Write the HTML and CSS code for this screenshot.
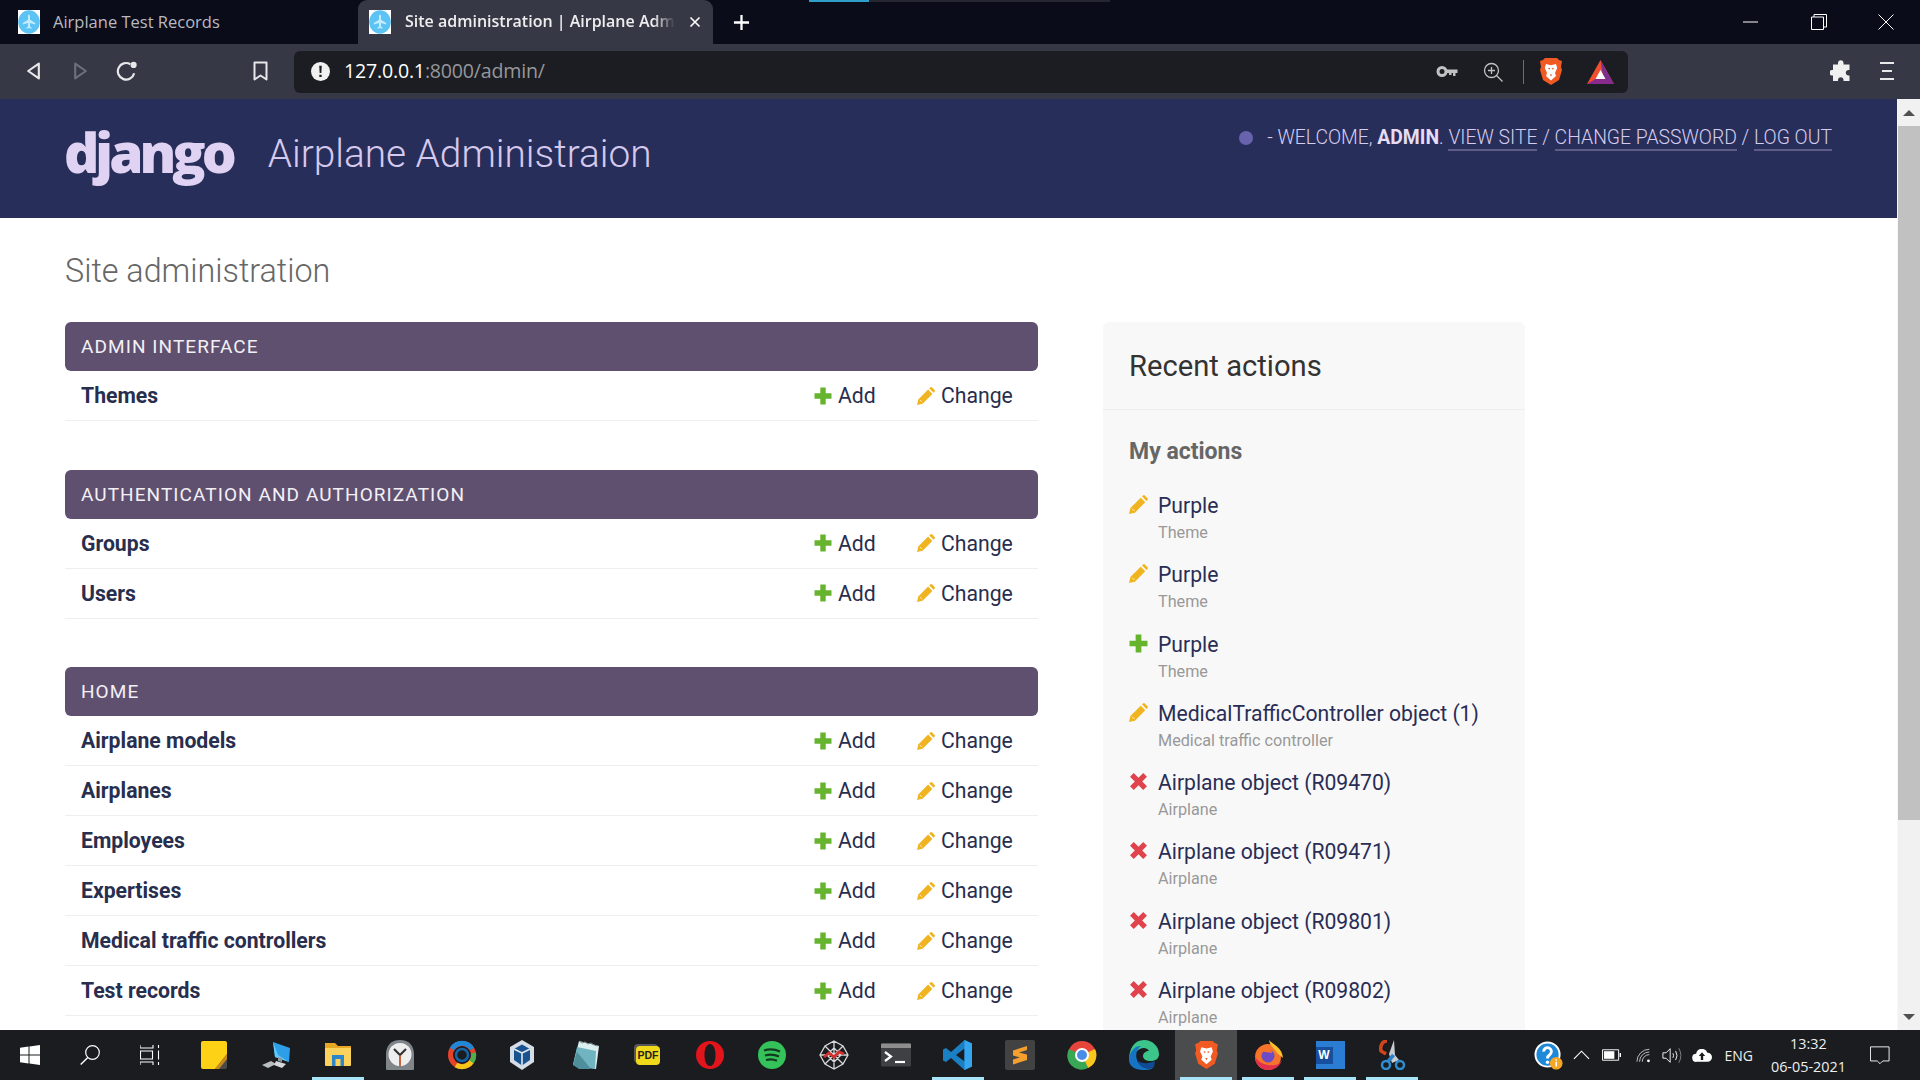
FILE: index.html
```html
<!DOCTYPE html>
<html lang="en">
<head>
<meta charset="utf-8">
<title>Site administration | Airplane Administraion</title>
<link rel="stylesheet" href="styles.css">
</head>
<body>
<svg class="defs" width="0" height="0" aria-hidden="true">
  <symbol id="fav" viewBox="0 0 22 24"><rect width="22" height="24" fill="#fff"/><ellipse cx="11" cy="12" rx="10.800" ry="11.800" fill="#5cc3f5"/><path d="M11 4.500c.7 0 1 .9 1 2v3.200l5.200 3.200v1.600L12 12.900v3.600l1.600 1.200v1L11 18l-2.600.7v-1L10 16.500v-3.600l-5.200 1.600v-1.600L10 9.700V6.500c0-1.100.3-2 1-2z" fill="#c4ecff"/></symbol>
  <symbol id="plus" viewBox="0 0 18 18"><path d="M6.300.5h5.400v5.800h5.800v5.400h-5.800v5.800H6.300v-5.800H.5V6.300h5.800z" fill="#66b32e"/></symbol>
  <symbol id="pencil" viewBox="0 0 18 18"><path d="M0 18l1.300-5.600L11.100 2.600l4.300 4.300-9.800 9.800z" fill="#efb41f"/><path d="M12.300 1.400l.8-.8a1.500 1.500 0 0 1 2.100 0l2.200 2.200a1.500 1.500 0 0 1 0 2.100l-.8.800z" fill="#efb41f"/><path d="M2.800 12.900l2.300 2.300" stroke="#fff" stroke-width=".7"/></symbol>
  <symbol id="cross" viewBox="0 0 18 18"><path d="M4.500 1L9 5.500 13.500 1 17 4.500 12.500 9l4.500 4.500-3.500 3.500L9 12.500 4.500 17 1 13.500 5.500 9 1 4.500z" fill="#e0434b"/></symbol>
  <symbol id="lion" viewBox="0 0 24 29"><path d="M6 1h12l2 2 3 1-1 6 1 3-3 10-8 5-8-5-3-10 1-3-1-6 3-1z" fill="#f15a22"/><path d="M7 7l5 1.200L17 7l1.200 4-2.200 5 1 3-5 4.500L7 19l1-3-2.200-5z" fill="#fff"/><path d="M8.800 11h2.400l-.7 1.700zM12.800 11h2.400l-1.700 1.700zM10.800 17.500h2.400L12 19.500z" fill="#f15a22"/></symbol>
</svg>

<header class="tabstrip">
  <div class="tab">
    <svg class="favicon"><use href="#fav"/></svg>
    <span class="tab-title">Airplane Test Records</span>
  </div>
  <div class="tab tab-active">
    <svg class="favicon"><use href="#fav"/></svg>
    <span class="tab-title tab-title-fade">Site administration | Airplane Administraion</span>
    <svg class="tab-close" viewBox="0 0 12 12"><path d="M1.500 1.500l9 9M10.500 1.500l-9 9" stroke="#fff" stroke-width="1.600"/></svg>
  </div>
  <svg class="newtab" viewBox="0 0 18 18"><path d="M9 1v16M1 9h16" stroke="#fff" stroke-width="2.400"/></svg>
  <div class="progress"><span class="progress-blue"></span></div>
  <div class="winctl">
    <span class="winbtn"><svg viewBox="0 0 16 16" width="16" height="16"><path d="M0 8h15" stroke="#fff"/></svg></span>
    <span class="winbtn"><svg viewBox="0 0 16 16" width="16" height="16"><path d="M.5 3h12v12.500H.5zM3 3V.5h12.500V13H12.500" fill="none" stroke="#fff"/></svg></span>
    <span class="winbtn"><svg viewBox="0 0 16 16" width="16" height="16"><path d="M.5.500l15 15M15.500.5l-15 15" stroke="#fff"/></svg></span>
  </div>
</header>

<nav class="toolbar">
  <svg class="tool tool-back" viewBox="0 0 16 18"><path d="M13 2L3 9l10 7z" fill="none" stroke="#e8e8ea" stroke-width="2" stroke-linejoin="round"/></svg>
  <svg class="tool tool-fwd" viewBox="0 0 16 18"><path d="M3 2l10 7-10 7z" fill="none" stroke="#6d6f79" stroke-width="2" stroke-linejoin="round"/></svg>
  <svg class="tool tool-reload" viewBox="0 0 20 20"><path d="M16.500 12a7.500 7.500 0 1 1-3.500-8.200" fill="none" stroke="#e8e8ea" stroke-width="2"/><circle cx="16" cy="4.500" r="2.800" fill="#e8e8ea"/></svg>
  <svg class="tool tool-mark" viewBox="0 0 16 20"><path d="M2 1.500h12v17l-6-4-6 4z" fill="none" stroke="#e8e8ea" stroke-width="2" stroke-linejoin="round"/></svg>
  <div class="omnibox">
    <svg class="warn" viewBox="0 0 18 18"><circle cx="9" cy="9" r="9" fill="#f1f1f1"/><path d="M7.800 3.500h2.400l-.4 7H8.200zM7.900 12h2.200v2.200H7.900z" fill="#1b1d22"/></svg>
    <span class="url"><span class="url-host">127.0.0.1</span>:8000/admin/</span>
    <svg class="omni-key" viewBox="0 0 22 13"><circle cx="6" cy="6.500" r="4" fill="none" stroke="#c2c2c4" stroke-width="3"/><path d="M9 4.500h12.500v3.500h-2v3h-2.500V8h-1.500v2H13V8H9z" fill="#c2c2c4"/></svg>
    <svg class="omni-zoom" viewBox="0 0 20 20"><circle cx="8.500" cy="8.500" r="7" fill="none" stroke="#c2c2c4" stroke-width="1.300"/><path d="M13.500 13.500l6 6M8.500 5v7M5 8.500h7" stroke="#c2c2c4" stroke-width="1.300"/></svg>
    <span class="omni-sep"></span>
    <svg class="omni-lion"><use href="#lion"/></svg>
    <svg class="omni-bat" viewBox="0 0 27 24"><path d="M13.500 0L27 24H0z" fill="#f1502f"/><path d="M13.500 0L27 24H17z" fill="#7c2f8d"/><path d="M13.500 10l5 9h-10z" fill="#fff"/><path d="M0 24l8.500-5h10L27 24z" fill="#8a2a8c"/></svg>
  </div>
  <svg class="tool tool-ext" viewBox="0 0 22 22"><path d="M8 2.500a2.800 2.800 0 0 1 5.500 0v2h6v5.500h-1.500a2.800 2.800 0 0 0 0 5.500h1.500V21h-6v-1.500a2.800 2.800 0 0 0-5.500 0V21H3v-5.500H1.800a2.800 2.800 0 0 1 0-5.500H3V4.500h5z" fill="#f0f0f0"/></svg>
  <svg class="tool tool-menu" viewBox="0 0 14 20"><path d="M0 2h14M2 10h10M0 18h14" stroke="#e8e8ea" stroke-width="2.200"/></svg>
</nav>

<div class="viewport">
  <div class="page">
    <div class="admin-header">
      <div class="branding">
        <span class="logo">django</span>
        <span class="site-name">Airplane Administraion</span>
      </div>
      <div class="user-tools">
        <span class="dot"></span>
        <span>- WELCOME, <strong>ADMIN</strong>. <a>VIEW SITE</a> / <a>CHANGE PASSWORD</a> / <a>LOG OUT</a></span>
      </div>
    </div>
    <main class="content">
      <h1 class="page-title">Site administration</h1>
      <div class="columns">
        <div class="apps">
          <section class="module">
            <h2 class="module-head">Admin Interface</h2>
            <div class="row"><a class="model">Themes</a><a class="act act-add"><svg class="ico"><use href="#plus"/></svg>Add</a><a class="act act-chg"><svg class="ico"><use href="#pencil"/></svg>Change</a></div>
          </section>
          <section class="module">
            <h2 class="module-head">Authentication and Authorization</h2>
            <div class="row"><a class="model">Groups</a><a class="act act-add"><svg class="ico"><use href="#plus"/></svg>Add</a><a class="act act-chg"><svg class="ico"><use href="#pencil"/></svg>Change</a></div>
            <div class="row"><a class="model">Users</a><a class="act act-add"><svg class="ico"><use href="#plus"/></svg>Add</a><a class="act act-chg"><svg class="ico"><use href="#pencil"/></svg>Change</a></div>
          </section>
          <section class="module">
            <h2 class="module-head">Home</h2>
            <div class="row"><a class="model">Airplane models</a><a class="act act-add"><svg class="ico"><use href="#plus"/></svg>Add</a><a class="act act-chg"><svg class="ico"><use href="#pencil"/></svg>Change</a></div>
            <div class="row"><a class="model">Airplanes</a><a class="act act-add"><svg class="ico"><use href="#plus"/></svg>Add</a><a class="act act-chg"><svg class="ico"><use href="#pencil"/></svg>Change</a></div>
            <div class="row"><a class="model">Employees</a><a class="act act-add"><svg class="ico"><use href="#plus"/></svg>Add</a><a class="act act-chg"><svg class="ico"><use href="#pencil"/></svg>Change</a></div>
            <div class="row"><a class="model">Expertises</a><a class="act act-add"><svg class="ico"><use href="#plus"/></svg>Add</a><a class="act act-chg"><svg class="ico"><use href="#pencil"/></svg>Change</a></div>
            <div class="row"><a class="model">Medical traffic controllers</a><a class="act act-add"><svg class="ico"><use href="#plus"/></svg>Add</a><a class="act act-chg"><svg class="ico"><use href="#pencil"/></svg>Change</a></div>
            <div class="row"><a class="model">Test records</a><a class="act act-add"><svg class="ico"><use href="#plus"/></svg>Add</a><a class="act act-chg"><svg class="ico"><use href="#pencil"/></svg>Change</a></div>
          </section>
        </div>
        <aside class="recent">
          <h2 class="recent-head">Recent actions</h2>
          <h3 class="recent-sub">My actions</h3>
          <ul class="actions">
            <li class="action"><svg class="ico-r"><use href="#pencil"/></svg><div><a class="a-name">Purple</a><span class="a-type">Theme</span></div></li>
            <li class="action"><svg class="ico-r"><use href="#pencil"/></svg><div><a class="a-name">Purple</a><span class="a-type">Theme</span></div></li>
            <li class="action"><svg class="ico-r"><use href="#plus"/></svg><div><a class="a-name">Purple</a><span class="a-type">Theme</span></div></li>
            <li class="action"><svg class="ico-r"><use href="#pencil"/></svg><div><a class="a-name">MedicalTrafficController object (1)</a><span class="a-type">Medical traffic controller</span></div></li>
            <li class="action"><svg class="ico-r"><use href="#cross"/></svg><div><a class="a-name">Airplane object (R09470)</a><span class="a-type">Airplane</span></div></li>
            <li class="action"><svg class="ico-r"><use href="#cross"/></svg><div><a class="a-name">Airplane object (R09471)</a><span class="a-type">Airplane</span></div></li>
            <li class="action"><svg class="ico-r"><use href="#cross"/></svg><div><a class="a-name">Airplane object (R09801)</a><span class="a-type">Airplane</span></div></li>
            <li class="action"><svg class="ico-r"><use href="#cross"/></svg><div><a class="a-name">Airplane object (R09802)</a><span class="a-type">Airplane</span></div></li>
          </ul>
        </aside>
      </div>
    </main>
  </div>
  <div class="scrollbar">
    <span class="sb-btn"><svg viewBox="0 0 12 6" width="12" height="6"><path d="M6 0l6 6H0z" fill="#505050"/></svg></span>
    <span class="sb-thumb"></span>
    <span class="sb-track"></span>
    <span class="sb-btn"><svg viewBox="0 0 12 6" width="12" height="6"><path d="M0 0h12L6 6z" fill="#505050"/></svg></span>
  </div>
</div>

<footer class="taskbar">
  <span class="tb-sys"><svg class="tb-sys-ico" viewBox="0 0 20 20"><path d="M0 2.800L8.500 1.500v8H0zM9.500 1.400L20 0v9.500H9.500zM0 10.500h8.500v8L0 17.200zM9.500 10.500H20V20L9.500 18.600z" fill="#fff"/></svg></span>
  <span class="tb-sys"><svg class="tb-sys-ico" viewBox="0 0 20 20"><circle cx="12.500" cy="7.500" r="6.800" fill="none" stroke="#fff" stroke-width="1.200"/><path d="M7.800 12.500L.7 19.500" stroke="#fff" stroke-width="1.400"/></svg></span>
  <span class="tb-sys tb-sys-last"><svg class="tb-sys-ico" viewBox="0 0 20 20"><path d="M0 0v3h13V0M.5 6h12v8H.5zM0 20v-3h13v3M18.500 0v3M18.500 5.500v9M18.500 17v3" fill="none" stroke="#fff" stroke-width="1.100"/></svg></span>
  <span class="tb-item"><svg class="tb-ico" viewBox="0 0 30 30"><path d="M4 1h22a2 2 0 0 1 2 2v15L17 29H4a2 2 0 0 1-2-2V3a2 2 0 0 1 2-2z" fill="#fcd116"/><path d="M28 14v13a2 2 0 0 1-2 2H16z" fill="#4a4a4a"/><path d="M28 14L16 29h4l8-10z" fill="#c98a1b"/></svg></span>
  <span class="tb-item"><svg class="tb-ico" viewBox="0 0 30 30"><path d="M12 2l17 6-1 14-14-5z" fill="#2f9ee8"/><path d="M12 2l5 13 11 7-14-5z" fill="#63c8f7"/><path d="M1 25l9-4 5 3-8 4z" fill="#b9bec2"/><path d="M15 21l10 3-4 4-8-3z" fill="#d6d9db"/><path d="M17 17l4 1v4l-4-1z" fill="#8f979c"/></svg></span>
  <span class="tb-item tb-open"><svg class="tb-ico" viewBox="0 0 30 30"><path d="M2 3h10l3 3h13v4H2z" fill="#e8a823"/><path d="M2 8h26v17a1 1 0 0 1-1 1H3a1 1 0 0 1-1-1z" fill="#fbd35c"/><path d="M9 15h12v11H9z" fill="#2d86c9"/><path d="M12.500 19h5v7h-5z" fill="#fbd35c"/></svg></span>
  <span class="tb-item"><svg class="tb-ico" viewBox="0 0 30 30"><path d="M15 0c9 0 14 6 14 14v15a1 1 0 0 1-1 1H2a1 1 0 0 1-1-1V14C1 6 6 0 15 0z" fill="#80858a"/><circle cx="15" cy="14.500" r="11.500" fill="#eeeeee"/><path d="M15 15v11" stroke="#c2542a" stroke-width="1.800"/><path d="M15 15L9 9M15 15l6-6" stroke="#333" stroke-width="2.200"/></svg></span>
  <span class="tb-item"><svg class="tb-ico" viewBox="0 0 30 30"><circle cx="15" cy="15" r="11.500" fill="none" stroke="#e6432b" stroke-width="5"/><path d="M5 9A11.500 11.500 0 0 1 25 9" fill="none" stroke="#1f86d8" stroke-width="5"/><path d="M25 21A11.500 11.500 0 0 1 9 25" fill="none" stroke="#f5c518" stroke-width="5"/><path d="M26.500 13a11.500 11.500 0 0 1-2 9" fill="none" stroke="#4caf50" stroke-width="5"/><circle cx="15" cy="15" r="6" fill="#1a1c1f" stroke="#1565a8" stroke-width="2.500"/></svg></span>
  <span class="tb-item"><svg class="tb-ico tb-shift-l" viewBox="0 0 30 30"><path d="M15 0l12 7v15l-12 8-12-8V7z" fill="#d5dde6"/><path d="M15 4.500l8 4.500v11l-8 5.500-8-5.500V9z" fill="#19538f"/><path d="M15 13l8-4M15 13L7 9M15 13v12.500" stroke="#dfe6ee" stroke-width="1.600"/></svg></span>
  <span class="tb-item"><svg class="tb-ico" viewBox="0 0 30 30"><path d="M8 1l20 5-3 23L2 25z" fill="#dbeef0"/><path d="M6 7l19 4-1 18L2 25z" fill="#6fb4c0"/><path d="M6 12l14 17H8L2 25z" fill="#4e8f9b"/><path d="M8 1l3 2 3-1 3 2 3-1 3 2 4 1" stroke="#7c8a8e" fill="none"/></svg></span>
  <span class="tb-item"><span class="tb-pdf">PDF</span></span>
  <span class="tb-item"><svg class="tb-ico" viewBox="0 0 30 30"><path fill-rule="evenodd" d="M15 1a14 14 0 1 1 0 28 14 14 0 0 1 0-28zm0 3c-3.500 0-5.500 5-5.500 11s2 11 5.500 11 5.500-5 5.500-11-2-11-5.500-11z" fill="#e2141c"/></svg></span>
  <span class="tb-item"><svg class="tb-ico" viewBox="0 0 30 30"><circle cx="15" cy="15" r="14" fill="#35c25a"/><path d="M7 10.500q8-2.500 16 1M8 15.500q7-2 14 1M9 20q6-1.500 11 .8" fill="none" stroke="#123b1f" stroke-width="2.300"/></svg></span>
  <span class="tb-item"><svg class="tb-ico" viewBox="0 0 30 30"><path d="M15 1l9 5 5 9-5 9-9 5-9-5-5-9 5-9zM15 1v28M1 15h28M6 6l18 18M24 6L6 24M15 8l7 7-7 7-7-7z" fill="none" stroke="#d8d8d8" stroke-width="1.300"/><path d="M5 17l5-4 5 4 5-5 5 2" fill="none" stroke="#d32f2f" stroke-width="2.800"/></svg></span>
  <span class="tb-item"><svg class="tb-ico" viewBox="0 0 30 30"><rect y="3.500" width="30" height="23" rx="1" fill="#3f4043"/><path d="M0 4.500a1 1 0 0 1 1-1h28a1 1 0 0 1 1 1V8H0z" fill="#8d8d8d"/><path d="M4 12l6 4.500-6 4.500" fill="none" stroke="#fff" stroke-width="2.200"/><path d="M14 22h10" stroke="#fff" stroke-width="2.200"/></svg></span>
  <span class="tb-item tb-open"><svg class="tb-ico" viewBox="0 0 30 30"><path d="M21.500 0L29 3.500v23L21.500 30 8 18l-5 4-3-1.500V9.500L3 8l5 4z" fill="#1b7fc4"/><path d="M21.500 8.500v13L13 15z" fill="#1a1c1f"/><path d="M21.500 0L29 3.500v23L21.500 30z" fill="#35a5ee"/></svg></span>
  <span class="tb-item"><svg class="tb-ico" viewBox="0 0 30 30"><rect width="30" height="30" rx="2" fill="#424242"/><path d="M22 6L8 10.500v5l14 4v-5l-8-2 8-2.500zM8 24.500l14-4.500v-5L8 19.500z" fill="#f59f2f"/></svg></span>
  <span class="tb-item"><svg class="tb-ico" viewBox="0 0 30 30"><circle cx="15" cy="15" r="14" fill="#e5453a"/><path d="M15 15L28 9a14 14 0 0 1-7 19z" fill="#f9c81e"/><path d="M15 15l6 13A14 14 0 0 1 2 9z" fill="#3aa757"/><circle cx="15" cy="15" r="7" fill="#fff"/><circle cx="15" cy="15" r="5" fill="#4a8de8"/></svg></span>
  <span class="tb-item"><svg class="tb-ico" viewBox="0 0 30 30"><path d="M15 0C24 0 30 7 30 14c0 5-4 7-8 7-5 0-8-2-8-5 0-3 3-5 6-5-2-4-8-4-12 0-4 3-7 9-8 9C0 9 5 0 15 0z" fill="#3cc58b"/><path d="M0 20C0 11 7 5 12 6c-4 3-6 8-4 14 2 6 10 11 17 7-3 3-7 3-11 3C6 30 0 26 0 20z" fill="#1774c5"/><path d="M8 20c3 4 12 4 18 1l-1 6c-7 4-15-1-17-7z" fill="#0f4b96"/></svg></span>
  <span class="tb-item tb-open tb-active"><svg class="tb-lion"><use href="#lion"/></svg></span>
  <span class="tb-item tb-open"><svg class="tb-ico" viewBox="0 0 30 30"><circle cx="15" cy="17" r="13" fill="#f6732a"/><path d="M16 0c4 5 13 7 14 18l-6-5C21 8 17 6 16 0z" fill="#fcc02f"/><path d="M2 17c0 6 5 13 13 13 7 0 12-4 14-10-3 5-8 6-14 5S6 22 2 17z" fill="#e3304c"/><circle cx="15" cy="16" r="6.500" fill="#6c4bc4"/><path d="M8 10c5-3 11-1 11 3-4-1-8 0-11-3z" fill="#f6732a"/></svg></span>
  <span class="tb-item tb-open"><span class="tb-word"><span class="tb-word-w">W</span></span></span>
  <span class="tb-item tb-open"><svg class="tb-ico" viewBox="0 0 30 30"><path d="M10 1C5 1 3 6 4 11l5 3" fill="none" stroke="#d0451b" stroke-width="3.500"/><path d="M17 0l1 15 4 5-7 3-3-9z" fill="#c7ccd1"/><path d="M9 21l6-7 3 2-5 6z" fill="#2f7fc4"/><circle cx="9" cy="25" r="4" fill="none" stroke="#2f8ed1" stroke-width="2.500"/><circle cx="23" cy="25" r="4" fill="none" stroke="#2f8ed1" stroke-width="2.500"/></svg></span>
  <span class="tb-spacer"></span>
  <svg class="tray-help" viewBox="0 0 30 30"><circle cx="14" cy="14" r="12.500" fill="#1e88d9" stroke="#fff" stroke-width="2"/><path d="M10 11a4 4 0 1 1 6.500 3c-1.500 1-2.500 2-2.500 4" fill="none" stroke="#fff" stroke-width="3"/><circle cx="14" cy="22" r="1.800" fill="#fff"/><circle cx="23" cy="23" r="6.500" fill="#f5a623"/><path d="M23 21.500v5M23 19v1.200" stroke="#fff" stroke-width="1.600"/></svg>
  <svg class="tray-chev" viewBox="0 0 18 10"><path d="M1 9l8-8 8 8" fill="none" stroke="#fff" stroke-width="1.200"/></svg>
  <svg class="tray-bat" viewBox="0 0 20 12"><path d="M.5.500h17v11H.5z" fill="none" stroke="#fff"/><path d="M2 2h11v8H2z" fill="#fff"/><path d="M18.500 4h1.500v4h-1.500z" fill="#fff"/></svg>
  <svg class="tray-wifi" viewBox="0 0 18 16"><path d="M1 15A14 14 0 0 1 15 1M4 15A11 11 0 0 1 15 4M7 15a8 8 0 0 1 8-8" fill="none" stroke="#d0d0d0" stroke-width="1"/><circle cx="14" cy="14" r="1.600" fill="#fff"/></svg>
  <svg class="tray-vol" viewBox="0 0 22 18"><path d="M1 6h3.500L9 1.500v15L4.500 12H1z" fill="none" stroke="#fff"/><path d="M12 6.500q1.500 2.500 0 5M15 4q3 5 0 10" fill="none" stroke="#fff"/><path d="M18.500 1q4.500 8 0 16" fill="none" stroke="#888"/></svg>
  <svg class="tray-cloud" viewBox="0 0 22 14"><path d="M5 14a4.500 4.500 0 0 1-.5-9 6.500 6.500 0 0 1 12.500-1 5 5 0 0 1 0 10z" fill="#fff"/><path d="M11 3.500l3.500 4H12.300V12h-2.600V7.500H7.500z" fill="#1a1c1f"/></svg>
  <span class="tray-lang">ENG</span>
  <span class="tray-clock"><span>13:32</span><span>06-05-2021</span></span>
  <svg class="tray-note" viewBox="0 0 22 20"><path d="M.5.500h20.500v15.500h-7l-3 3-3-3h-7.500z" fill="none" stroke="#fff"/></svg>
</footer>
</body>
</html>
```
FILE: styles.css
```css
* { box-sizing: border-box; }
html, body { height: 100%; }
body {
  margin: 0;
  display: flex;
  flex-direction: column;
  height: 100vh;
  overflow: hidden;
  font-family: Roboto, "Liberation Sans", sans-serif;
  background: #fff;
}
.defs { position: absolute; }

/* browser chrome */
.tabstrip { height: 44px; flex: none; display: flex; align-items: stretch; background: #0b0c1a; position: relative; }
.tab { width: 358px; flex: none; display: flex; align-items: center; padding-left: 18px; color: #b9bac0; font-size: 16.500px; font-family: "Open Sans", sans-serif; }
.tab-active { width: 355px; background: #363845; border-radius: 9px 9px 0 0; padding-left: 11px; color: #eee; font-weight: 600; font-size: 16px; }
.favicon { width: 22px; height: 24px; flex: none; margin-right: 13px; }
.tab-active .favicon { margin-right: 14px; }
.tab-title { white-space: nowrap; overflow: hidden; padding-bottom: 2px; }
.tab-title-fade { width: 270px; -webkit-mask-image: linear-gradient(90deg, #000 92%, transparent); mask-image: linear-gradient(90deg, #000 92%, transparent); }
.tab-close { width: 12px; height: 12px; margin-left: 14px; flex: none; }
.newtab { width: 17px; height: 17px; align-self: center; margin-left: 20px; flex: none; }
.progress { position: absolute; left: 809px; top: 0; width: 301px; height: 2px; background: #25262f; }
.progress-blue { display: block; width: 60px; height: 2px; background: #2f9fc9; }
.winctl { margin-left: auto; display: flex; align-items: center; }
.winbtn { width: 67.500px; display: flex; justify-content: center; }
.toolbar { height: 55px; flex: none; display: flex; align-items: center; background: #363845; position: relative; }
.tool { flex: none; margin-bottom: 2px; }
.tool-back { width: 17px; height: 20px; margin-left: 25px; }
.tool-fwd { width: 17px; height: 20px; margin-left: 30px; }
.tool-reload { width: 22px; height: 22px; margin-left: 27px; }
.tool-mark { width: 17px; height: 20px; margin-left: 114px; }
.omnibox { width: 1334px; height: 42px; margin-left: 25px; background: #1b1d22; border-radius: 6px; display: flex; align-items: center; padding-left: 17px; flex: none; }
.warn { width: 19px; height: 19px; flex: none; }
.url { margin-left: 14px; margin-bottom: 2px; color: #96979b; font-size: 19.600px; font-family: "Open Sans", sans-serif; letter-spacing: -.2px; }
.url-host { color: #fff; }
.omni-key { width: 22px; height: 13px; margin-left: auto; }
.omni-zoom { width: 20px; height: 20px; margin-left: 25px; }
.omni-sep { width: 1px; height: 24px; background: #6d6e72; margin-left: 20px; }
.omni-lion { width: 24px; height: 29px; margin-left: 15px; }
.omni-bat { width: 27px; height: 24px; margin-left: 24px; margin-right: 14px; }
.tool-ext { width: 22px; height: 22px; margin-left: 202px; }
.tool-menu { width: 14px; height: 20px; margin-left: 28px; }

/* page */
.viewport { flex: 1; min-height: 0; display: flex; }
.page { flex: 1; min-width: 0; overflow: hidden; }
.admin-header { height: 119px; background: #282e5a; display: flex; justify-content: space-between; padding: 0 65px; color: #dcd0f0; }
.branding { display: flex; align-items: center; padding-bottom: 10px; }
.logo { font-family: "Open Sans", sans-serif; font-weight: 800; font-size: 55px; letter-spacing: -4px; line-height: 1; color: #e0d2f2; margin: -4px 0 0 -1px; }
.site-name { font-size: 38.800px; font-weight: 300; margin-left: 35px; color: #d6c9ee; }
.user-tools { display: flex; align-items: center; height: 77px; font-size: 19.350px; font-weight: 300; color: #d6cdee; }
.user-tools strong { font-weight: 700; color: #e6dcf6; }
.user-tools a { border-bottom: 2px solid #5e5c87; }
.dot { width: 14px; height: 14px; border-radius: 50%; background: #6863ad; margin-right: 14px; }
.content { padding: 0 65px; }
.page-title { margin: 0; padding-top: 34px; height: 104px; font-size: 32.300px; line-height: 38px; font-weight: 300; color: #666; }
.columns { display: flex; align-items: flex-start; }
.apps { width: 973px; flex: none; }
.module { margin-bottom: 48.500px; }
.module-head { margin: 0; height: 49px; line-height: 49px; padding-left: 16px; background: #5f5070; color: #f3f0f5; border-radius: 6px; font-size: 19px; font-weight: 400; letter-spacing: 1.070px; text-transform: uppercase; }
.row { height: 50px; display: flex; align-items: center; padding: 0 25px 0 16px; border-bottom: 1px solid #eeeeee; color: #282e4e; font-size: 21.200px; }
.model { font-weight: 700; margin-right: auto; }
.act { display: flex; align-items: center; font-weight: 400; }
.act-add { width: 103px; }
.act-chg { width: 96px; }
.ico { width: 18px; height: 18px; margin-right: 6px; flex: none; }
.recent { width: 422px; margin-left: 65px; flex: none; background: #f8f8f8; border-radius: 6px; }
.recent-head { margin: 0; height: 88px; padding: 26px 26px 0; font-size: 29.200px; line-height: 36px; font-weight: 400; color: #333; border-bottom: 1px solid #eeeeee; }
.recent-sub { margin: 0; padding: 28px 26px 0; height: 83px; font-size: 23px; line-height: 28px; font-weight: 700; color: #666; }
.actions { margin: 0; padding: 0 26px; list-style: none; }
.action { display: flex; height: 69.300px; align-items: flex-start; }
.ico-r { width: 19px; height: 19px; margin-right: 10px; margin-top: 2px; flex: none; }
.a-name { display: block; font-size: 21.150px; line-height: 26px; color: #2a2d55; }
.a-type { display: block; font-size: 16.200px; line-height: 27px; color: #999; }
.scrollbar { width: 23px; flex: none; background: #f1f1f1; display: flex; flex-direction: column; border-left: 1px solid #f8f8f8; }
.sb-btn { height: 27px; display: flex; align-items: center; justify-content: center; flex: none; }
.sb-thumb { height: 694px; background: #c1c1c1; flex: none; }
.sb-track { flex: 1; }

/* taskbar */
.taskbar { height: 50px; flex: none; background: #1a1c1f; display: flex; align-items: center; color: #fff; }
.tb-sys { width: 60px; height: 50px; flex: none; display: flex; align-items: center; justify-content: center; }
.tb-sys-last { margin-right: 3px; }
.tb-sys-ico { width: 20px; height: 20px; }
.tb-item { width: 62px; height: 50px; flex: none; display: flex; align-items: center; justify-content: center; position: relative; }
.tb-open::after { content: ""; position: absolute; left: 5px; right: 5px; bottom: 0; height: 3px; background: #a8e4f7; }
.tb-active { background: #4a4c4e; }
.tb-ico { width: 30px; height: 30px; }
.tb-shift-l { margin-right: 4px; }
.tb-lion { width: 25px; height: 30px; }
.tb-pdf { width: 24px; height: 19px; border-radius: 4px; background: #f0d91b; box-shadow: -2px -2px 0 #55575a; color: #222; font: 700 10.500px/19px "Liberation Sans", sans-serif; text-align: center; }
.tb-word { width: 29px; height: 28px; background: #2b7cd3; display: flex; align-items: center; }
.tb-word-w { width: 17px; height: 17px; background: #174e9e; color: #fff; font: 700 12px/17px "Liberation Sans", sans-serif; text-align: center; }
.tb-spacer { flex: 1; }
.tray-help { width: 29px; height: 29px; margin-right: 10px; }
.tray-chev { width: 17px; height: 10px; margin-right: 12px; }
.tray-bat { width: 19px; height: 12px; margin-right: 15.500px; }
.tray-wifi { width: 16px; height: 15px; margin-right: 10px; }
.tray-vol { width: 20px; height: 17px; margin-right: 10px; }
.tray-cloud { width: 20px; height: 13px; margin-right: 12px; }
.tray-lang { font-family: "Open Sans", sans-serif; font-size: 14px; color: #eee; margin-right: 18px; }
.tray-clock { display: flex; flex-direction: column; align-items: center; font-family: "Open Sans", sans-serif; font-size: 14.400px; line-height: 23px; color: #eee; }
.tray-note { width: 20px; height: 19px; margin-left: 24px; margin-right: 30px; }
```
